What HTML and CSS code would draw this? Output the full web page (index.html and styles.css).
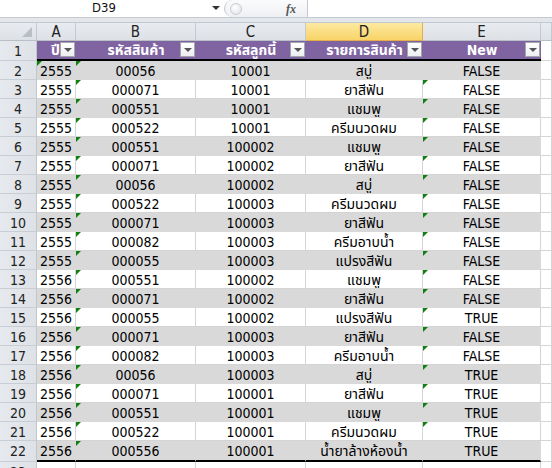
FILE: index.html
```html
<!DOCTYPE html>
<html>
<head>
<meta charset="utf-8">
<link rel="stylesheet" href="styles.css">
</head>
<body>
<div class="topbar">
  <div class="namebox"><span class="name">D39</span><span class="nb-arrow"></span></div>
  <div class="grip"><span class="knob"></span><span class="fx">fx</span></div>
  <div class="formula"></div>
</div>
<div class="strip"></div>
<div class="sheet">
  <div class="row colhead">
    <div class="corner"><span class="tri"></span></div>
    <div class="ch">A</div><div class="ch">B</div><div class="ch">C</div><div class="ch sel">D</div><div class="ch">E</div><div class="ch"></div>
  </div>
  <div class="row hdr">
    <div class="rh">1</div>
    <div class="hc narrow">ปี<span class="fb"></span></div>
    <div class="hc">รหัสสินค้า<span class="fb"></span></div>
    <div class="hc">รหัสลูกนี้<span class="fb"></span></div>
    <div class="hc">รายการสินค้า<span class="fb"></span></div>
    <div class="hc">New<span class="fb"></span></div>
    <div class="c blank"></div>
  </div>
  <div class="row band"><div class="rh">2</div><div class="c a err">2555</div><div class="c err">00056</div><div class="c">10001</div><div class="c">สบู่</div><div class="c">FALSE</div><div class="c blank"></div></div>
  <div class="row"><div class="rh">3</div><div class="c a">2555</div><div class="c err">000071</div><div class="c">10001</div><div class="c">ยาสีฟัน</div><div class="c err">FALSE</div><div class="c blank"></div></div>
  <div class="row band"><div class="rh">4</div><div class="c a">2555</div><div class="c err">000551</div><div class="c">10001</div><div class="c">แชมพู</div><div class="c err">FALSE</div><div class="c blank"></div></div>
  <div class="row"><div class="rh">5</div><div class="c a">2555</div><div class="c err">000522</div><div class="c">10001</div><div class="c">ครีมนวดผม</div><div class="c err">FALSE</div><div class="c blank"></div></div>
  <div class="row band"><div class="rh">6</div><div class="c a">2555</div><div class="c err">000551</div><div class="c">100002</div><div class="c">แชมพู</div><div class="c err">FALSE</div><div class="c blank"></div></div>
  <div class="row"><div class="rh">7</div><div class="c a">2555</div><div class="c err">000071</div><div class="c">100002</div><div class="c">ยาสีฟัน</div><div class="c err">FALSE</div><div class="c blank"></div></div>
  <div class="row band"><div class="rh">8</div><div class="c a">2555</div><div class="c err">00056</div><div class="c">100002</div><div class="c">สบู่</div><div class="c err">FALSE</div><div class="c blank"></div></div>
  <div class="row"><div class="rh">9</div><div class="c a">2555</div><div class="c err">000522</div><div class="c">100003</div><div class="c">ครีมนวดผม</div><div class="c err">FALSE</div><div class="c blank"></div></div>
  <div class="row band"><div class="rh">10</div><div class="c a">2555</div><div class="c err">000071</div><div class="c">100003</div><div class="c">ยาสีฟัน</div><div class="c err">FALSE</div><div class="c blank"></div></div>
  <div class="row"><div class="rh">11</div><div class="c a">2555</div><div class="c err">000082</div><div class="c">100003</div><div class="c">ครีมอาบน้ำ</div><div class="c err">FALSE</div><div class="c blank"></div></div>
  <div class="row band"><div class="rh">12</div><div class="c a">2555</div><div class="c err">000055</div><div class="c">100003</div><div class="c">แปรงสีฟัน</div><div class="c err">FALSE</div><div class="c blank"></div></div>
  <div class="row"><div class="rh">13</div><div class="c a">2556</div><div class="c err">000551</div><div class="c">100002</div><div class="c">แชมพู</div><div class="c err">FALSE</div><div class="c blank"></div></div>
  <div class="row band"><div class="rh">14</div><div class="c a">2556</div><div class="c err">000071</div><div class="c">100002</div><div class="c">ยาสีฟัน</div><div class="c err">FALSE</div><div class="c blank"></div></div>
  <div class="row"><div class="rh">15</div><div class="c a">2556</div><div class="c err">000055</div><div class="c">100002</div><div class="c">แปรงสีฟัน</div><div class="c err">TRUE</div><div class="c blank"></div></div>
  <div class="row band"><div class="rh">16</div><div class="c a">2556</div><div class="c err">000071</div><div class="c">100003</div><div class="c">ยาสีฟัน</div><div class="c err">FALSE</div><div class="c blank"></div></div>
  <div class="row"><div class="rh">17</div><div class="c a">2556</div><div class="c err">000082</div><div class="c">100003</div><div class="c">ครีมอาบน้ำ</div><div class="c err">FALSE</div><div class="c blank"></div></div>
  <div class="row band"><div class="rh">18</div><div class="c a">2556</div><div class="c err">00056</div><div class="c">100003</div><div class="c">สบู่</div><div class="c err">TRUE</div><div class="c blank"></div></div>
  <div class="row"><div class="rh">19</div><div class="c a">2556</div><div class="c err">000071</div><div class="c">100001</div><div class="c">ยาสีฟัน</div><div class="c err">TRUE</div><div class="c blank"></div></div>
  <div class="row band"><div class="rh">20</div><div class="c a">2556</div><div class="c err">000551</div><div class="c">100001</div><div class="c">แชมพู</div><div class="c err">TRUE</div><div class="c blank"></div></div>
  <div class="row"><div class="rh">21</div><div class="c a">2556</div><div class="c err">000522</div><div class="c">100001</div><div class="c">ครีมนวดผม</div><div class="c err">TRUE</div><div class="c blank"></div></div>
  <div class="row band last"><div class="rh">22</div><div class="c a">2556</div><div class="c err">000556</div><div class="c">100001</div><div class="c">น้ำยาล้างห้องน้ำ</div><div class="c">TRUE</div><div class="c blank"></div></div>
  <div class="row"><div class="rh">23</div><div class="c"></div><div class="c"></div><div class="c"></div><div class="c"></div><div class="c"></div><div class="c blank"></div></div>
</div>
</body>
</html>
```
FILE: styles.css
```css
html, body {
  margin: 0;
  padding: 0;
}
body {
  width: 552px;
  height: 468px;
  overflow: hidden;
  background: #fff;
  font-family: "DejaVu Sans Condensed", "DejaVu Sans", Tahoma, "Noto Sans Thai", sans-serif;
  font-size: 14px;
  color: #000;
}

/* formula bar */
.topbar {
  display: flex;
  height: 18px;
  box-sizing: border-box;
  border-bottom: 1px solid #c5cad1;
  background: #fff;
}
.namebox {
  width: 224px;
  position: relative;
  display: flex;
  justify-content: center;
}
.name {
  font-size: 13px;
  line-height: 14px;
  padding-top: 1px;
  color: #111;
  margin-right: 16px;
}
.nb-arrow {
  position: absolute;
  left: 212px;
  top: 6px;
  width: 0;
  height: 0;
  border-left: 4px solid transparent;
  border-right: 4px solid transparent;
  border-top: 4px solid #333;
}
.grip {
  width: 84px;
  position: relative;
  box-sizing: border-box;
  border-left: 1px solid #c4c8ce;
  border-right: 1px solid #c4c8ce;
  border-radius: 10px 0 0 10px;
  background: linear-gradient(#fbfbfc, #eef0f3);
  display: flex;
  justify-content: flex-end;
  align-items: center;
}
.knob {
  position: absolute;
  left: 5px;
  top: 3px;
  width: 10px;
  height: 10px;
  border-radius: 50%;
  border: 1px solid #c9ccd1;
  background: radial-gradient(circle at 40% 35%, #ffffff, #dcdfe3);
}
.fx {
  font-family: "Liberation Serif", serif;
  font-style: italic;
  font-weight: bold;
  font-size: 12px;
  color: #555;
  width: 32px;
  text-align: center;
  line-height: 16px;
}
.formula {
  flex: 1;
}
.strip {
  height: 4px;
  background: #e3e6ea;
  border-bottom: 1px solid #c2c8cf;
}

/* sheet */
.row {
  display: grid;
  grid-template-columns: 37px 39px 120px 110px 117px 118px 1fr;
  height: 19px;
}
.row > div {
  box-sizing: border-box;
  position: relative;
  overflow: hidden;
  white-space: nowrap;
}
.colhead {
  height: 18px;
}
.colhead > div {
  background: linear-gradient(#e8ebef, #dde1e6);
  border-right: 1px solid #c3c9d0;
  border-bottom: 1px solid #b8bfc7;
  text-align: center;
  font-size: 15px;
  line-height: 16px;
  padding-top: 1px;
  color: #222;
}
.colhead > .sel {
  background: linear-gradient(#fde9a2, #f8d467);
  border-right: 1px solid #e2ad4a;
  border-bottom: 1px solid #e2ad4a;
}
.corner .tri {
  position: absolute;
  right: 4px;
  bottom: 3px;
  width: 0;
  height: 0;
  border-left: 10px solid transparent;
  border-bottom: 10px solid #b9bec5;
}
.rh {
  background: linear-gradient(90deg, #e6e9ed, #dee2e7);
  border-right: 1px solid #c0c6cd;
  border-bottom: 1px solid #c9ced5;
  text-align: center;
  line-height: 16px;
  padding-top: 2px;
  color: #222;
}

/* header row */
.hdr {
  height: 20px;
}
.hc {
  background: #8064a2;
  color: #fff;
  font-weight: bold;
  text-align: center;
  line-height: 16px;
  padding-top: 1px;
  border-bottom: 2px solid #000;
}
.hc.narrow {
  text-align: right;
  padding-right: 16px;
}
.hdr .rh {
  padding-top: 2px;
}
.fb {
  position: absolute;
  right: 1px;
  top: 1px;
  width: 15px;
  height: 15px;
  box-sizing: border-box;
  border: 1px solid #a3a6ab;
  background: linear-gradient(#ffffff, #eceef1);
}
.fb::after {
  content: "";
  position: absolute;
  left: 3px;
  top: 5px;
  border-left: 4px solid transparent;
  border-right: 4px solid transparent;
  border-top: 4px solid #555;
}

/* data cells */
.c {
  border-right: 1px solid #d4d4d4;
  border-bottom: 1px solid #d4d4d4;
  text-align: center;
  line-height: 16px;
  padding-top: 2px;
}
.c.a {
  text-align: left;
  padding-left: 3px;
}
.band .c {
  background: #d9d9d9;
  border-color: #d9d9d9;
}
.band .c.blank,
.hdr .c.blank {
  background: #fff;
  border-color: #d4d4d4;
}
.last {
  height: 21px;
}
.last .c {
  border-bottom: 2px solid #000;
}
.last .c.blank {
  border-bottom: 1px solid #d4d4d4;
}
.err::before {
  content: "";
  position: absolute;
  left: 0;
  top: 0;
  width: 0;
  height: 0;
  border-top: 5px solid #108010;
  border-right: 5px solid transparent;
}
```
